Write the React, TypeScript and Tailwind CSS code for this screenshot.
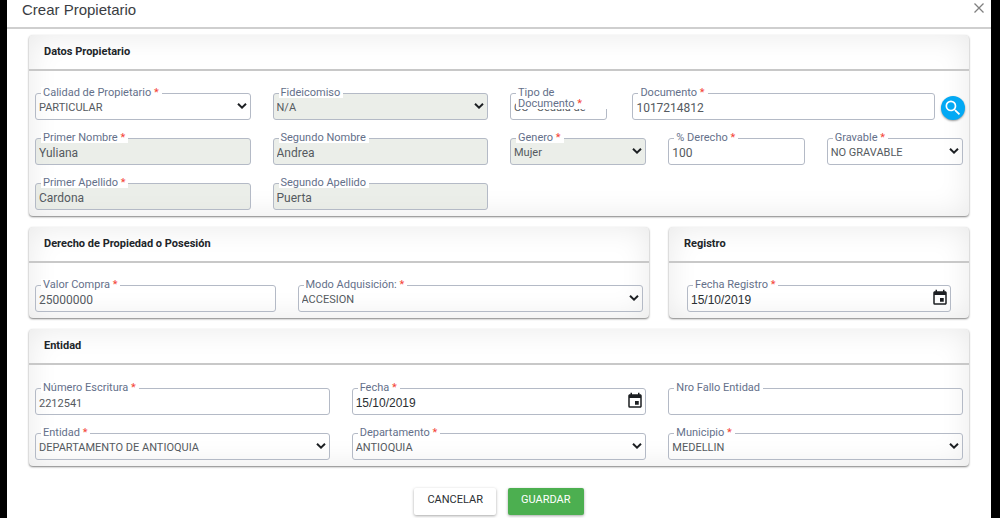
import { useId } from "react";
import type { ReactNode } from "react";
import { MdEvent, MdSearch } from "react-icons/md";

type FieldProps = {
  label: string;
  value: string;
  className?: string;
  required?: boolean;
  disabled?: boolean;
  small?: boolean;
};

const box =
  "block h-[27px] w-full rounded-[3px] border border-[#b4bac6] pl-[3px] outline-none focus:border-[#03a9f4]";

function FieldLabel({ id, label, required }: { id: string; label: string; required?: boolean }) {
  return (
    <label
      htmlFor={id}
      className="absolute -top-[6px] left-[6px] max-w-[calc(100%-6px)] bg-white pl-[2px] pr-[3px] font-['Roboto',sans-serif] text-[11px] leading-[11px] text-[#64708a]"
    >
      {label}
      {required && <span className="text-[#f44336]"> *</span>}
    </label>
  );
}

function TextField({ label, value, className = "", required, disabled, small }: FieldProps) {
  const id = useId();
  return (
    <div className={`relative ${className}`}>
      <input
        id={id}
        type="text"
        defaultValue={value}
        disabled={disabled}
        className={`${box} pt-[3px] font-['Roboto',sans-serif] text-[#555a60] ${small ? "text-[11px]" : "text-[12px]"} ${disabled ? "bg-[#d7ddd3]/50" : "bg-transparent"}`}
      />
      <FieldLabel id={id} label={label} required={required} />
    </div>
  );
}

function SelectField({ label, value, className = "", required, disabled }: FieldProps) {
  const id = useId();
  return (
    <div className={`relative ${className}`}>
      <select
        id={id}
        defaultValue={value}
        disabled={disabled}
        className={`${box} appearance-none pt-1 pr-[18px] font-['Roboto',sans-serif] text-[11px] text-[#555a60] opacity-100 ${disabled ? "bg-[#d7ddd3]/50" : "bg-transparent"}`}
      >
        <option>{value}</option>
      </select>
      <svg
        viewBox="0 0 10 6"
        className="pointer-events-none absolute right-1 top-[10px] h-[6px] w-[10px] fill-none stroke-[#1c1f22] stroke-2"
      >
        <path d="M1 0.8 5 4.6 9 0.8" />
      </svg>
      <FieldLabel id={id} label={label} required={required} />
    </div>
  );
}

function DateField({ label, value, className = "", required }: FieldProps) {
  const id = useId();
  return (
    <div className={`relative ${className}`}>
      <input
        id={id}
        type="text"
        defaultValue={value}
        className={`${box} bg-transparent pt-[3px] pr-6 text-[12px] text-[#2b2f33]`}
      />
      <button type="button" aria-label="Abrir calendario" className="absolute right-[2px] top-1 text-[#1c1f22]">
        <MdEvent size={18} />
      </button>
      <FieldLabel id={id} label={label} required={required} />
    </div>
  );
}

function Panel({ title, children }: { title: string; children: ReactNode }) {
  return (
    <section className="rounded-[4px] shadow-[inset_0_0_30px_rgba(0,0,0,0.09),0_1px_2px_rgba(0,0,0,0.5)]">
      <h2 className="h-9 border-b-2 border-[#c8c8c8] px-[15px] font-['Roboto',sans-serif] text-[11px] font-bold leading-[34px] text-[#212529]">
        {title}
      </h2>
      {children}
    </section>
  );
}

export default function App() {
  return (
    <div className="min-h-screen bg-black pl-[7px] pr-[9px] font-['Liberation_Sans',Arial,sans-serif]">
      <div className="flex min-h-screen flex-col bg-white">
        <header className="flex h-[29px] items-start justify-between border-b-2 border-[#cfcfcf] pl-[15px] pr-[7px]">
          <h1 className="text-[15px] leading-5 text-[#3a3d42]">Crear Propietario</h1>
          <button type="button" aria-label="Cerrar" className="pt-[3px]">
            <svg viewBox="0 0 10 10" className="h-[10px] w-[10px] fill-none stroke-[#808080]">
              <path strokeWidth="1.3" d="M0.5 0.5 9.5 9.5M9.5 0.5 0.5 9.5" />
            </svg>
          </button>
        </header>

        <form className="flex flex-col gap-[11px] px-[22px] pt-[6px]" onSubmit={(e) => e.preventDefault()}>
          <Panel title="Datos Propietario">
            <div className="grid grid-cols-12 gap-x-[22px] gap-y-[18px] px-[6px] pb-[6px] pt-[22px]">
              <SelectField className="col-span-3" label="Calidad de Propietario" value="PARTICULAR" required />
              <SelectField className="col-span-3" label="Fideicomiso" value="N/A" disabled />
              <div className="col-span-6 flex">
                <SelectField
                  className="mr-[25px] w-[21.5%]"
                  label="Tipo de Documento"
                  value="CC - Cedula de Ciudadania"
                  required
                />
                <TextField className="mr-[6px] flex-1" label="Documento" value="1017214812" required />
                <button
                  type="button"
                  aria-label="Buscar"
                  className="mt-[3px] -mr-[2px] flex size-6 items-center justify-center rounded-full bg-[#03a9f4] text-white shadow-[0_1px_2px_rgba(0,0,0,0.4)]"
                >
                  <MdSearch size={20} />
                </button>
              </div>

              <TextField className="col-span-3" label="Primer Nombre" value="Yuliana" required disabled />
              <TextField className="col-span-3" label="Segundo Nombre" value="Andrea" disabled />
              <SelectField className="col-span-2" label="Genero" value="Mujer" required disabled />
              <TextField className="col-span-2" label="% Derecho" value="100" required />
              <SelectField className="col-span-2" label="Gravable" value="NO GRAVABLE" required />

              <TextField className="col-span-3" label="Primer Apellido" value="Cardona" required disabled />
              <TextField className="col-span-3" label="Segundo Apellido" value="Puerta" disabled />
            </div>
          </Panel>

          <div className="grid grid-cols-[31fr_15fr] gap-5">
            <Panel title="Derecho de Propiedad o Posesión">
              <div className="grid grid-cols-12 gap-x-[22px] px-[6px] pb-[6px] pt-[22px]">
                <TextField className="col-span-5" label="Valor Compra" value="25000000" required />
                <SelectField className="col-span-7" label="Modo Adquisición:" value="ACCESION" required />
              </div>
            </Panel>
            <Panel title="Registro">
              <div className="px-[18px] pb-[6px] pt-[22px]">
                <DateField label="Fecha Registro" value="15/10/2019" required />
              </div>
            </Panel>
          </div>

          <Panel title="Entidad">
            <div className="grid grid-cols-3 gap-x-[22px] gap-y-[18px] px-[6px] pb-[6px] pt-[23px]">
              <TextField label="Número Escritura" value="2212541" required small />
              <DateField label="Fecha" value="15/10/2019" required />
              <TextField label="Nro Fallo Entidad" value="" />
              <SelectField label="Entidad" value="DEPARTAMENTO DE ANTIOQUIA" required />
              <SelectField label="Departamento" value="ANTIOQUIA" required />
              <SelectField label="Municipio" value="MEDELLIN" required />
            </div>
          </Panel>

          <div className="flex justify-center gap-3 pt-[11px] font-['Roboto',sans-serif] text-[11px]">
            <button
              type="button"
              className="h-[27px] rounded-[2px] bg-white px-[13px] pb-[2px] text-[#2b2f33] shadow-[0_1px_3px_rgba(0,0,0,0.35)]"
            >
              CANCELAR
            </button>
            <button
              type="submit"
              className="h-[27px] rounded-[2px] bg-[#4caf50] px-[13px] pb-[2px] text-white shadow-[0_1px_3px_rgba(0,0,0,0.35)]"
            >
              GUARDAR
            </button>
          </div>
        </form>
      </div>
    </div>
  );
}
